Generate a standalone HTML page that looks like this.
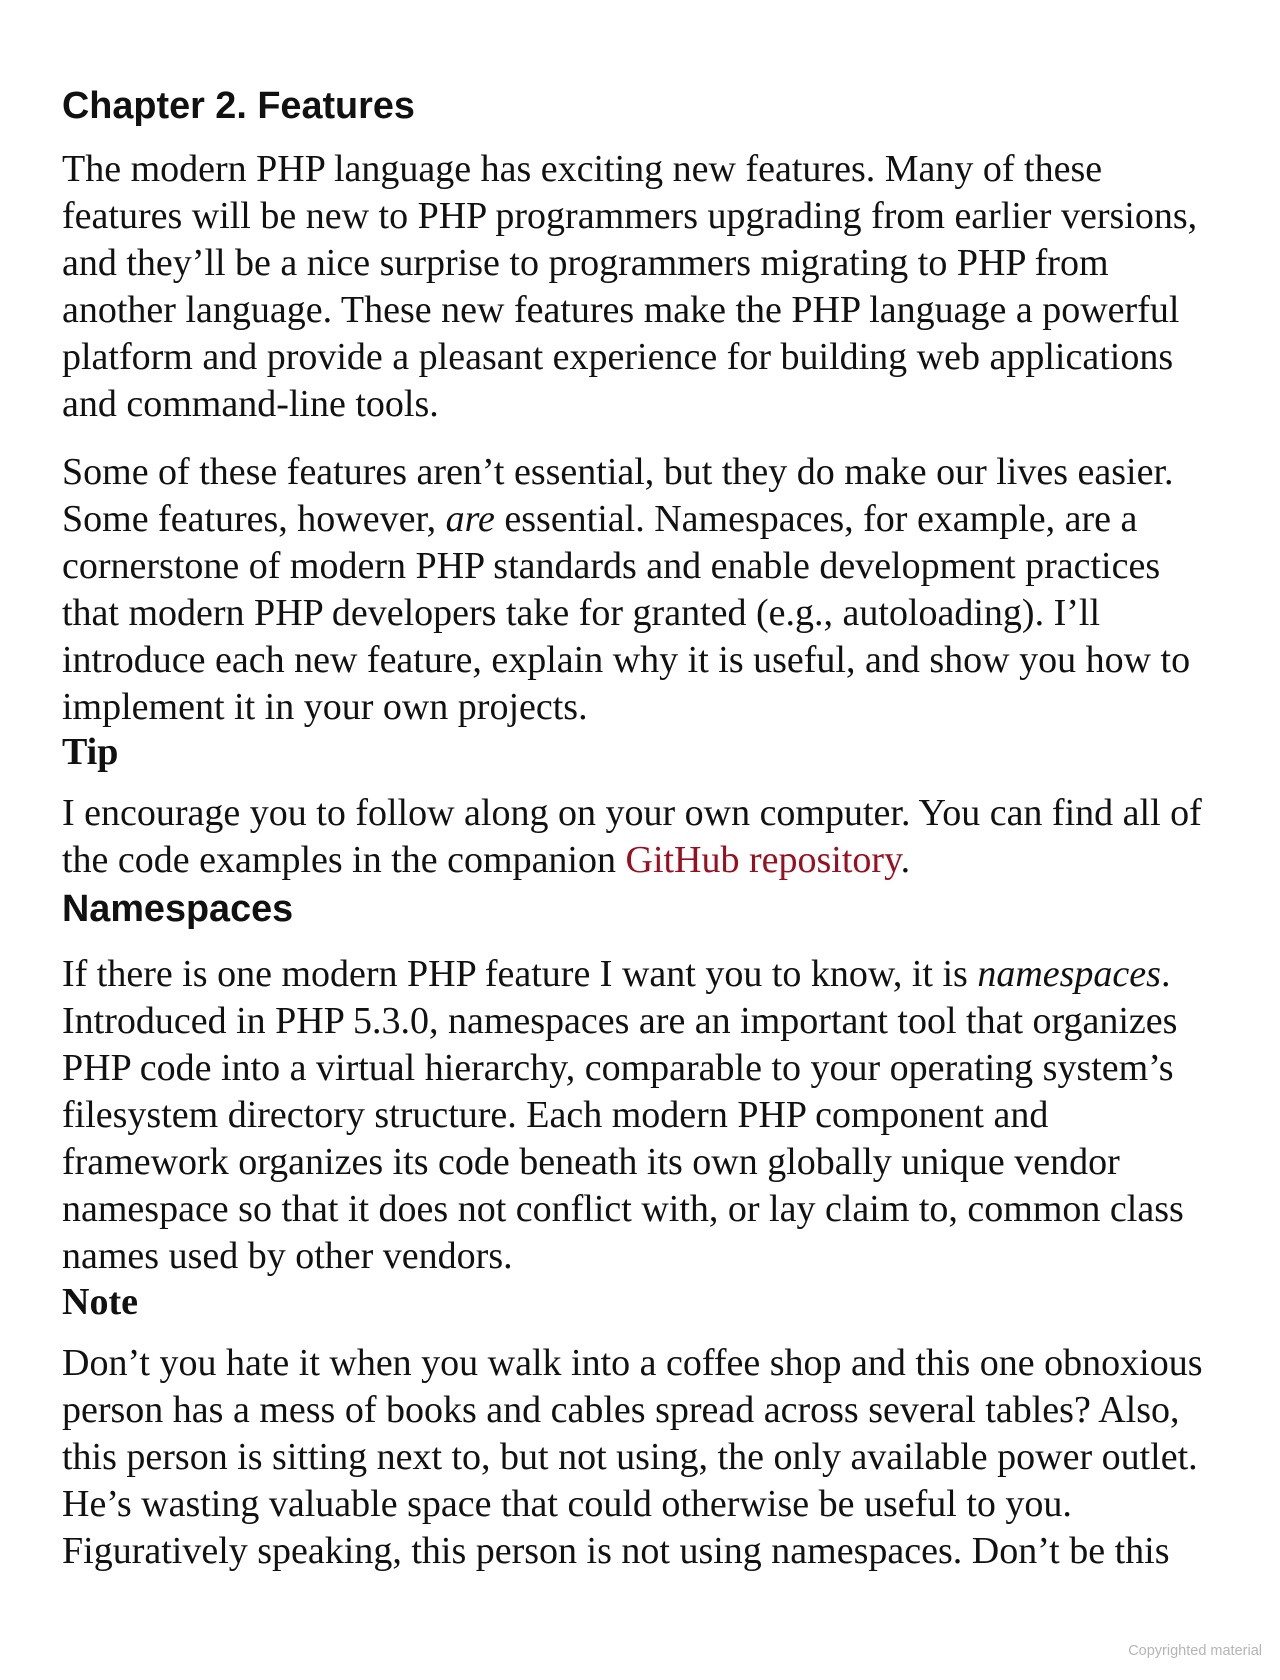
<!DOCTYPE html>
<html><head><meta charset="utf-8"><style>
html,body{margin:0;padding:0;background:#fff;width:1280px;height:1680px;overflow:hidden;position:relative}
.s{position:absolute;left:62px;font-family:"Liberation Serif",serif;font-size:38px;line-height:47px;color:#111;white-space:nowrap}
.h{position:absolute;left:62px;font-family:"Liberation Sans",sans-serif;font-weight:bold;font-size:37.8px;line-height:47px;color:#111;white-space:nowrap}
.b{font-weight:bold}
a{color:#9a0f1f;text-decoration:none}
.c{position:absolute;right:18px;top:1643px;font-family:"Liberation Sans",sans-serif;font-size:14.5px;color:#b5b5b5}
</style></head><body>
<div class="h" style="top:83px">Chapter 2. Features</div>
<div class="s" style="top:146px">The modern PHP language has exciting new features. Many of these<br>features will be new to PHP programmers upgrading from earlier versions,<br>and they’ll be a nice surprise to programmers migrating to PHP from<br>another language. These new features make the PHP language a powerful<br>platform and provide a pleasant experience for building web applications<br>and command-line tools.</div>
<div class="s" style="top:449px">Some of these features aren’t essential, but they do make our lives easier.<br>Some features, however, <i>are</i> essential. Namespaces, for example, are a<br>cornerstone of modern PHP standards and enable development practices<br>that modern PHP developers take for granted (e.g., autoloading). I’ll<br>introduce each new feature, explain why it is useful, and show you how to<br>implement it in your own projects.</div>
<div class="s b" style="top:729px">Tip</div>
<div class="s" style="top:790px">I encourage you to follow along on your own computer. You can find all of<br>the code examples in the companion <a>GitHub repository</a>.</div>
<div class="h" style="top:886px">Namespaces</div>
<div class="s" style="top:951px">If there is one modern PHP feature I want you to know, it is <i>namespaces</i>.<br>Introduced in PHP 5.3.0, namespaces are an important tool that organizes<br>PHP code into a virtual hierarchy, comparable to your operating system’s<br>filesystem directory structure. Each modern PHP component and<br>framework organizes its code beneath its own globally unique vendor<br>namespace so that it does not conflict with, or lay claim to, common class<br>names used by other vendors.</div>
<div class="s b" style="top:1279px">Note</div>
<div class="s" style="top:1340px">Don’t you hate it when you walk into a coffee shop and this one obnoxious<br>person has a mess of books and cables spread across several tables? Also,<br>this person is sitting next to, but not using, the only available power outlet.<br>He’s wasting valuable space that could otherwise be useful to you.<br>Figuratively speaking, this person is not using namespaces. Don’t be this</div>
<div class="c">Copyrighted material</div>
</body></html>
